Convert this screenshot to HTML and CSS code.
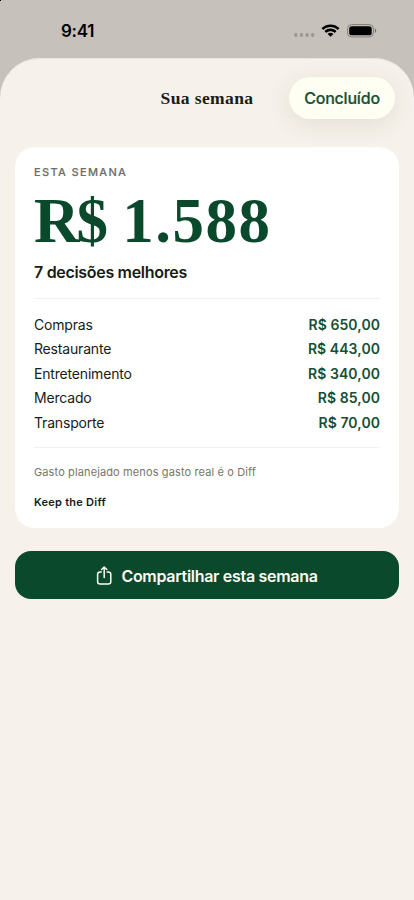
FILE: index.html
```html
<!DOCTYPE html>
<html lang="pt-BR">
<head>
<meta charset="utf-8">
<meta name="viewport" content="width=device-width, initial-scale=1">
<title>Sua semana</title>
<link rel="stylesheet" href="styles.css">
</head>
<body>
<div class="screen">
  <header class="status">
    <span class="time">9:41</span>
    <div class="indicators">
      <svg class="dots" width="22" height="4" viewBox="0 0 22 4"><g fill="#9c9893"><rect x="0.2" width="3.2" height="4" rx="1.4"/><rect x="5.9" width="3.2" height="4" rx="1.4"/><rect x="11.5" width="3.2" height="4" rx="1.4"/><rect x="17.1" width="3.2" height="4" rx="1.4"/></g></svg>
      <svg class="wifi" width="19" height="14" viewBox="0 0 18 13"><path d="M9 2.700c2.500 0 4.800 1 6.500 2.600.1.100.3.100.5 0l1.200-1.200c.2-.2.2-.4 0-.6C12.700-.8 5.300-.8.8 3.500c-.2.2-.2.400 0 .6L2 5.300c.1.100.3.100.5 0C4.200 3.700 6.500 2.700 9 2.700Zm0 4c1.400 0 2.700.5 3.700 1.400.1.200.4.200.5 0l1.200-1.200c.2-.2.2-.4 0-.6-3-2.800-7.800-2.800-10.800 0-.2.200-.2.400 0 .6l1.200 1.200c.1.200.4.200.5 0C6.300 7.200 7.600 6.700 9 6.700Zm2.500 2.900c.2-.2.2-.4 0-.5-1.400-1.200-3.600-1.200-5 0-.2.100-.2.300 0 .5l2.200 2.200c.2.200.4.200.6 0Z"/></svg>
      <svg class="battery" width="30" height="14" viewBox="0 0 30 14"><rect x=".6" y=".6" width="25.800" height="12.300" rx="4" fill="none" stroke="#817e79" stroke-width="1"/><rect x="2.200" y="2.200" width="22.500" height="9.100" rx="2.600"/><path d="M27.800 4.600v4.300c.9-.4 1.400-1.200 1.400-2.150s-.5-1.800-1.400-2.150Z" fill="#77746f"/></svg>
    </div>
  </header>
  <main class="sheet">
    <nav class="bar">
      <h1 class="title">Sua semana</h1>
      <button class="done">Concluído</button>
    </nav>
    <section class="card">
      <p class="eyebrow">ESTA SEMANA</p>
      <p class="amount"><span class="currency">R$</span> 1.588</p>
      <p class="decisions">7 decisões melhores</p>
      <ul class="rows">
        <li><span>Compras</span><b>R$ 650,00</b></li>
        <li><span>Restaurante</span><b>R$ 443,00</b></li>
        <li><span>Entretenimento</span><b>R$ 340,00</b></li>
        <li><span>Mercado</span><b>R$ 85,00</b></li>
        <li><span>Transporte</span><b>R$ 70,00</b></li>
      </ul>
      <p class="note">Gasto planejado menos gasto real é o Diff</p>
      <p class="brand">Keep the Diff</p>
    </section>
    <button class="share">
      <svg width="16" height="20" viewBox="0 0 16 20" fill="none" stroke="#fffdf3" stroke-width="1.500" stroke-linecap="round" stroke-linejoin="round"><path d="M5.300 6.100H4.100C2.400 6.100 1.600 6.900 1.600 8.400v7.400c0 1.500.8 2.300 2.500 2.300h8.200c1.700 0 2.500-.8 2.500-2.300V8.400c0-1.500-.8-2.300-2.500-2.300h-1.200M8.200 11.600V1.100M5.600 3.500 8.200 1l2.600 2.500"/></svg>
      <span>Compartilhar esta semana</span>
    </button>
  </main>
</div>
</body>
</html>
```
FILE: styles.css
```css
* { box-sizing: border-box; margin: 0; padding: 0; }
body { background: #c6c1bb; font-family: Inter, "Liberation Sans", sans-serif; color: #181b17; }
button { border: 0; font: inherit; }
.screen { height: 900px; display: flex; flex-direction: column; overflow: hidden; background: linear-gradient(#000, #000) 0 0 / 1px 1px no-repeat #c6c1bb; }
.status { flex: none; height: 58px; padding: 3px 37px 0 61px; display: flex; justify-content: space-between; align-items: center; color: #000; }
.time { font-size: 17px; font-weight: 600; line-height: 20px; letter-spacing: -.3px; }
.indicators { display: flex; align-items: center; }
.dots { margin: 9px 5px 0 0; }
.wifi { margin-right: 7px; }
.sheet { flex: 1; background: #f6f1ea; border-radius: 40px 40px 0 0; padding: 19px 15px 0; overflow: hidden; box-shadow: inset 0 1px 0 #e9e4dd; }
.bar { height: 70px; display: grid; grid-template-columns: 1fr auto 1fr; align-items: start; }
.title { grid-column: 2; font: 700 17.500px/42px "Liberation Serif", serif; letter-spacing: .4px; }
.done { justify-self: end; width: 106px; height: 42px; margin-right: 4px; border-radius: 21px; background: #fffef2; color: #174f34; font-size: 16px; font-weight: 500; letter-spacing: -.2px; -webkit-text-stroke: .2px; white-space: nowrap; box-shadow: 0 5px 24px rgba(70, 60, 40, .1); }
.card { height: 381px; background: #fff; border-radius: 20px; padding: 18px 19px 0; display: flex; flex-direction: column; }
.eyebrow { font-size: 11px; line-height: 15px; font-weight: 500; letter-spacing: 1.350px; color: #706e63; -webkit-text-stroke: .15px; }
.amount { padding-top: 5px; font: 700 63px/72px "Liberation Serif", serif; letter-spacing: 1.500px; color: #0b492c; white-space: nowrap; }
.currency { letter-spacing: -3px; }
.decisions { margin-top: 4px; font-size: 16px; line-height: 22px; font-weight: 600; letter-spacing: -.31px; }
.rows { list-style: none; margin-top: 15px; padding: 13.500px 0 12px; border: solid #f1f1f0; border-width: 1px 0; }
.rows li { display: flex; justify-content: space-between; font-size: 14px; line-height: 24.500px; letter-spacing: -.18px; }
.rows b { font-weight: 600; letter-spacing: .06px; color: #174f34; }
.note { margin-top: 16.500px; font-size: 11px; line-height: 15px; color: #77756b; letter-spacing: .12px; }
.brand { margin-top: 15px; font-size: 11px; line-height: 15px; font-weight: 600; letter-spacing: .25px; }
.share { width: 100%; height: 48.500px; margin-top: 22.500px; border-radius: 16px; background: #0b492c; color: #fffdf3; display: flex; justify-content: center; align-items: center; gap: 9px; padding-top: 2px; font-size: 16px; font-weight: 600; letter-spacing: -.3px; white-space: nowrap; }
```
